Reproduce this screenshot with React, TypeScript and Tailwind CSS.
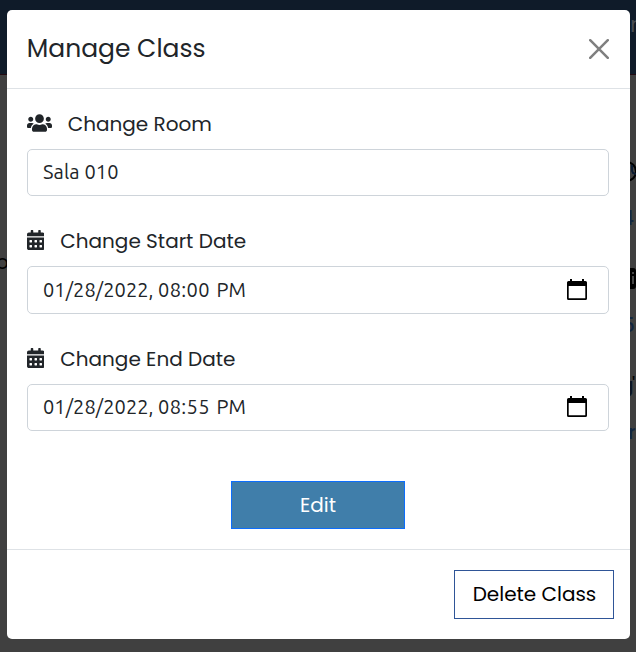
import React from "react";
import { FaCalendarAlt, FaUsers } from "react-icons/fa";

const poppins = "font-['Poppins','Inter',sans-serif]";
const ubuntu = "font-['Ubuntu','Noto_Sans',sans-serif]";

function DateGlyph() {
  return (
    <svg width="20" height="22" viewBox="0 0 20 22" className="mr-[6px]">
      <path d="M3 0h2v2h10V0h2v2h1.500Q20 2 20 3.500V19.500Q20 21 18.500 21h-17Q0 21 0 19.500v-16Q0 2 1.500 2H3zM1.700 7v12.300h16.600V7z" fill="#000" fillRule="evenodd" />
    </svg>
  );
}

function DateField({ date, time, className }: { date: string; time: string; className: string }) {
  return (
    <div className={`flex items-center justify-between rounded-[5px] border border-[#ced4da] px-[15px] text-[20px] ${ubuntu} ${className}`}>
      <div className="flex">
        <span className="w-[115px] tracking-[0.06px]">{date}</span>
        <span className="w-[58.500px] tracking-[0.35px]">{time}</span>
        <span>PM</span>
      </div>
      <DateGlyph />
    </div>
  );
}

function PageBehind() {
  return (
    <div className="absolute inset-0 overflow-hidden bg-[#404040]">
      <div className="h-[75px] border-b border-[#220911] bg-[#0f1b29]" />
      <span className={`absolute left-[-4px] top-[247px] text-[20px] text-black ${poppins}`}>o</span>
      <span className={`absolute left-[630px] top-[8px] text-[22px] text-[#474b51] ${poppins}`}>n</span>
      <div className="absolute left-[616px] top-[161px] h-[21px] w-[21px] rounded-full border-2 border-black" />
      <div className="absolute left-[631px] top-[165px] h-[10px] w-[6px] rounded-bl-[5px] border-b-2 border-l-2 border-[#0b1b31]" />
      <span className={`absolute left-[621px] top-[203px] text-[20px] font-medium text-[#12263f] ${poppins}`}>4</span>
      <div className="absolute left-[616px] top-[268px] h-[21px] w-[20px] rounded-[3px] bg-black" />
      <div className="absolute left-[632px] top-[276px] h-[8px] w-[2px] bg-[#454545]" />
      <div className="absolute left-[632px] top-[272px] h-[2px] w-[2px] bg-[#454545]" />
      <span className={`absolute left-[622px] top-[310px] text-[20px] font-medium text-[#12263f] ${poppins}`}>5</span>
      <span className={`absolute left-[620px] top-[370px] text-[20px] font-medium text-[#0b1420] ${poppins}`}>g</span>
      <span className={`absolute left-[632px] top-[370px] text-[20px] text-black ${poppins}`}>'</span>
      <span className={`absolute left-[628px] top-[417px] text-[20px] font-medium text-[#12263f] ${poppins}`}>r</span>
    </div>
  );
}

export default function App() {
  return (
    <div className="relative h-[652px] w-[636px] overflow-hidden">
      <PageBehind />
      <div className={`relative ml-[7px] w-[623px] pt-[10px] text-[#212529] ${poppins}`}>
        <div className="h-[629px] rounded-[5px] bg-white">
          <header className="flex h-[79px] items-center justify-between border-b border-[#dee2e6] pl-5 pr-[21px]">
            <h1 className="-ml-[0.300px] text-[25px]">Manage Class</h1>
            <svg width="20" height="20" viewBox="0 0 20 20" stroke="#7f7f7f" strokeWidth="2.500" strokeLinecap="round">
              <path d="M1.200 1.200 18.800 18.800M18.800 1.200 1.200 18.800" />
            </svg>
          </header>
          <main className="h-[460px] pl-5 pr-[21px] pt-[20px] text-[20px]">
            <label className="flex h-[30px] items-center gap-4"><FaUsers className="-ml-[0.300px] mb-[2px] h-5 w-[25px]" /><span>Change Room</span></label>
            <div className={`mt-[10px] flex h-[47px] items-center rounded-[5px] border border-[#ced4da] px-[15px] pb-[2px] tracking-[0.1px] ${ubuntu}`}>Sala 010</div>
            <label className="mt-[30px] flex h-[30px] items-center gap-[16.300px]"><FaCalendarAlt className="-ml-[0.500px] mb-[2px] h-5 w-[17.500px]" /><span>Change Start Date</span></label>
            <DateField date="01/28/2022," time="08:00" className="mt-[10px] h-[48px]" />
            <label className="mt-[30px] flex h-[30px] items-center gap-[16.300px]"><FaCalendarAlt className="-ml-[0.500px] mb-[2px] h-5 w-[17.500px]" /><span>Change End Date</span></label>
            <DateField date="01/28/2022," time="08:55" className="mt-[10px] h-[47px] pb-[2px]" />
            <button className="mx-auto mt-[50px] block h-[48px] w-[174px] border border-[#0d6efd] bg-[#407eaa] text-white">Edit</button>
          </main>
          <footer className="flex h-[90px] items-center justify-end border-t border-[#dee2e6] pr-4">
            <button className="h-[49px] w-[160px] border border-[#2f5597] pb-[2px] pl-[1px] text-[20px] text-black">Delete Class</button>
          </footer>
        </div>
      </div>
    </div>
  );
}
